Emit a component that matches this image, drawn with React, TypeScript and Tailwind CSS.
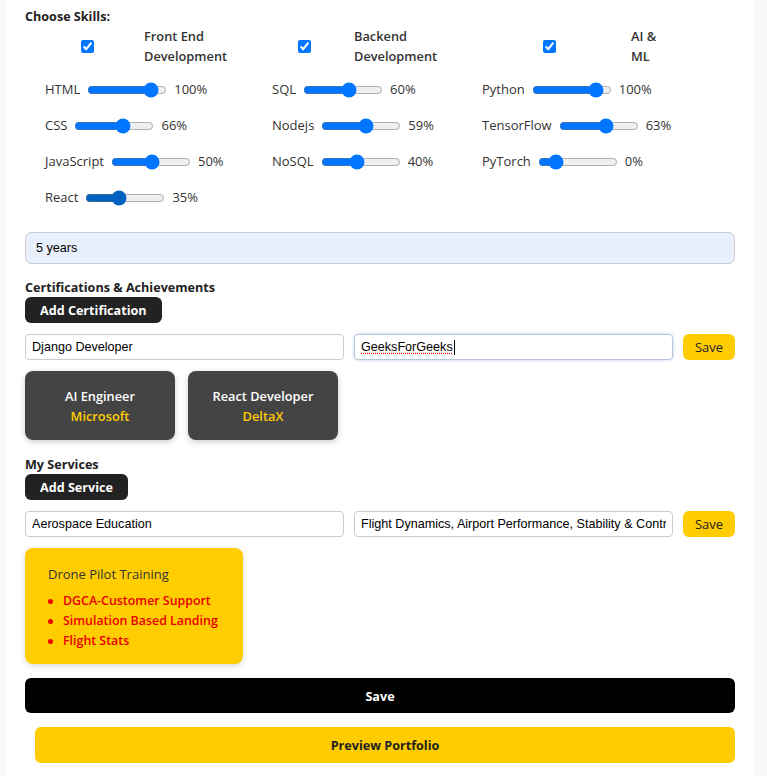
import React from "react";

const UI = { fontFamily: '"Open Sans", "Noto Sans", sans-serif' };
const AR = { fontFamily: '"Liberation Sans", Arial, sans-serif' };

type Skill = { name: string; v: number; shown: string };

const cols: { title: string; cbMl: string; gap: string; lw: string; w: string; skills: Skill[] }[] = [
  {
    title: "Front End Development",
    cbMl: "ml-[56px]",
    gap: "ml-[50px]",
    lw: "w-[85px]",
    w: "w-[227px]",
    skills: [
      { name: "HTML", v: 100, shown: "100%" },
      { name: "CSS", v: 66, shown: "66%" },
      { name: "JavaScript", v: 50, shown: "50%" },
      { name: "React", v: 35, shown: "35%" },
    ],
  },
  {
    title: "Backend Development",
    cbMl: "ml-[46px]",
    gap: "ml-[43px]",
    lw: "w-[85px]",
    w: "w-[210px]",
    skills: [
      { name: "SQL", v: 60, shown: "60%" },
      { name: "Nodejs", v: 59, shown: "59%" },
      { name: "NoSQL", v: 40, shown: "40%" },
    ],
  },
  {
    title: "AI & ML",
    cbMl: "ml-[81px]",
    gap: "ml-[75px]",
    lw: "w-[30px]",
    w: "flex-1",
    skills: [
      { name: "Python", v: 100, shown: "100%" },
      { name: "TensorFlow", v: 63, shown: "63%" },
      { name: "PyTorch", v: 0, shown: "0%" },
    ],
  },
];

export default function App() {
  return (
    <div className="min-h-screen bg-[#f9f9f9]" style={UI}>
      <div className="ml-[5px] w-[750px] bg-white px-5 pt-[6px] pb-[20px] text-[13px] text-[#333]">
        <div className="h-5 pt-px text-[12.6px] leading-[19px] font-bold text-[#222]">Choose Skills:</div>
        <div className="flex">
          {cols.map((c) => (
            <div key={c.title} className={c.w}>
              <div className="flex h-10 items-center">
                <input type="checkbox" defaultChecked className={`m-0 h-[13px] w-[13px] ${c.cbMl}`} />
                <span className={`${c.gap} ${c.lw} text-[12.8px] font-semibold leading-5 text-[#333]`}>{c.title}</span>
              </div>
              <div className="mt-[6px] pl-5">
                {c.skills.map((s) => (
                  <div key={s.name} className="flex h-9 items-center">
                    <span>{s.name}</span>
                    <input
                      type="range"
                      min={-22}
                      max={118}
                      defaultValue={s.v}
                      className={`mx-[7px] w-[80px] ${s.name === "React" ? "accent-[#0060c0]" : ""}`}
                    />
                    <span>{s.shown}</span>
                  </div>
                ))}
              </div>
            </div>
          ))}
        </div>

        <div
          className="mt-[16px] flex h-8 items-center rounded-md border border-[#ccc] bg-[#e8f0fe] pl-[10px] text-[12.6px] text-black"
          style={AR}
        >
          5 years
        </div>

        <div className="mt-[13px] h-5 pt-px text-[12.6px] leading-[19px] font-bold text-[#222]">
          Certifications &amp; Achievements
        </div>
        <button className="flex h-[26px] items-center rounded-md bg-[#222] px-[15px] pt-[2px] text-[12.6px] font-bold text-white">
          Add Certification
        </button>

        <div className="mt-[11px] flex items-center gap-[10px]">
          <div
            className="flex h-[26px] flex-1 items-center rounded border border-[#ccc] pl-[6px] text-[12.6px] text-black"
            style={AR}
          >
            Django Developer
          </div>
          <div
            className="flex h-[26px] flex-1 items-center rounded border border-[#b9c6dc] pl-[6px] text-[12.6px] text-black shadow-[0_0_3px_rgba(120,150,220,0.5)]"
            style={AR}
          >
            <span className="underline decoration-[#e00] decoration-dotted underline-offset-2">GeeksForGeeks</span>
            <span className="ml-[1px] h-[15px] w-px bg-black" />
          </div>
          <button className="h-[26px] w-[52px] rounded-md bg-[#ffcc00] pt-px text-[13px] text-[#222]">Save</button>
        </div>

        <div className="mt-[11px] flex gap-[13px]">
          {[
            ["AI Engineer", "Microsoft"],
            ["React Developer", "DeltaX"],
          ].map(([t, s]) => (
            <div
              key={t}
              className="flex h-[69px] w-[150px] flex-col items-center justify-center rounded-lg bg-[#444] pt-[1px] text-[12.8px] font-semibold shadow-[0_2px_6px_rgba(0,0,0,0.2)]"
            >
              <div className="leading-5 text-white">{t}</div>
              <div className="leading-5 text-[#ffcc00]">{s}</div>
            </div>
          ))}
        </div>

        <div className="mt-[14px] h-5 pt-px text-[12.6px] leading-[19px] font-bold text-[#222]">My Services</div>
        <button className="flex h-[26px] items-center rounded-md bg-[#222] px-[15px] pt-[2px] text-[12.6px] font-bold text-white">
          Add Service
        </button>

        <div className="mt-[11px] flex items-center gap-[10px]">
          <input
            readOnly
            value="Aerospace Education"
            className="h-[26px] min-w-0 flex-1 rounded border border-[#ccc] px-[6px] text-[12.6px] text-black outline-none"
            style={AR}
          />
          <input
            readOnly
            value="Flight Dynamics, Airport Performance, Stability & Control"
            className="h-[26px] min-w-0 flex-1 rounded border border-[#ccc] px-[6px] text-[12.6px] text-black outline-none"
            style={AR}
          />
          <button className="h-[26px] w-[52px] rounded-md bg-[#ffcc00] pt-px text-[13px] text-[#222]">Save</button>
        </div>

        <div className="mt-[11px] h-[116px] w-[218px] rounded-lg bg-[#ffcd00] pl-[23px] pt-4 shadow-[0_2px_6px_rgba(0,0,0,0.15)]">
          <div className="leading-5 text-[#333]">Drone Pilot Training</div>
          <ul className="mt-[7px]">
            {["DGCA-Customer Support", "Simulation Based Landing", "Flight Stats"].map((i) => (
              <li key={i} className="flex h-5 items-center text-[12.4px] font-semibold text-[#e80000]">
                <span className="h-[5px] w-[5px] rounded-full bg-[#e80000]" />
                <span className="ml-[10px]">{i}</span>
              </li>
            ))}
          </ul>
        </div>

        <button className="mt-[14px] flex h-[35px] w-full items-center justify-center rounded-md bg-black pt-[4px] text-[12.6px] font-bold text-white">
          Save
        </button>
        <div className="pl-[10px]">
          <button className="mt-[14px] flex h-[36px] w-full items-center justify-center rounded-md bg-[#ffcc00] pt-[3px] text-[12.6px] font-bold text-[#222]">
            Preview Portfolio
          </button>
        </div>
      </div>
    </div>
  );
}
